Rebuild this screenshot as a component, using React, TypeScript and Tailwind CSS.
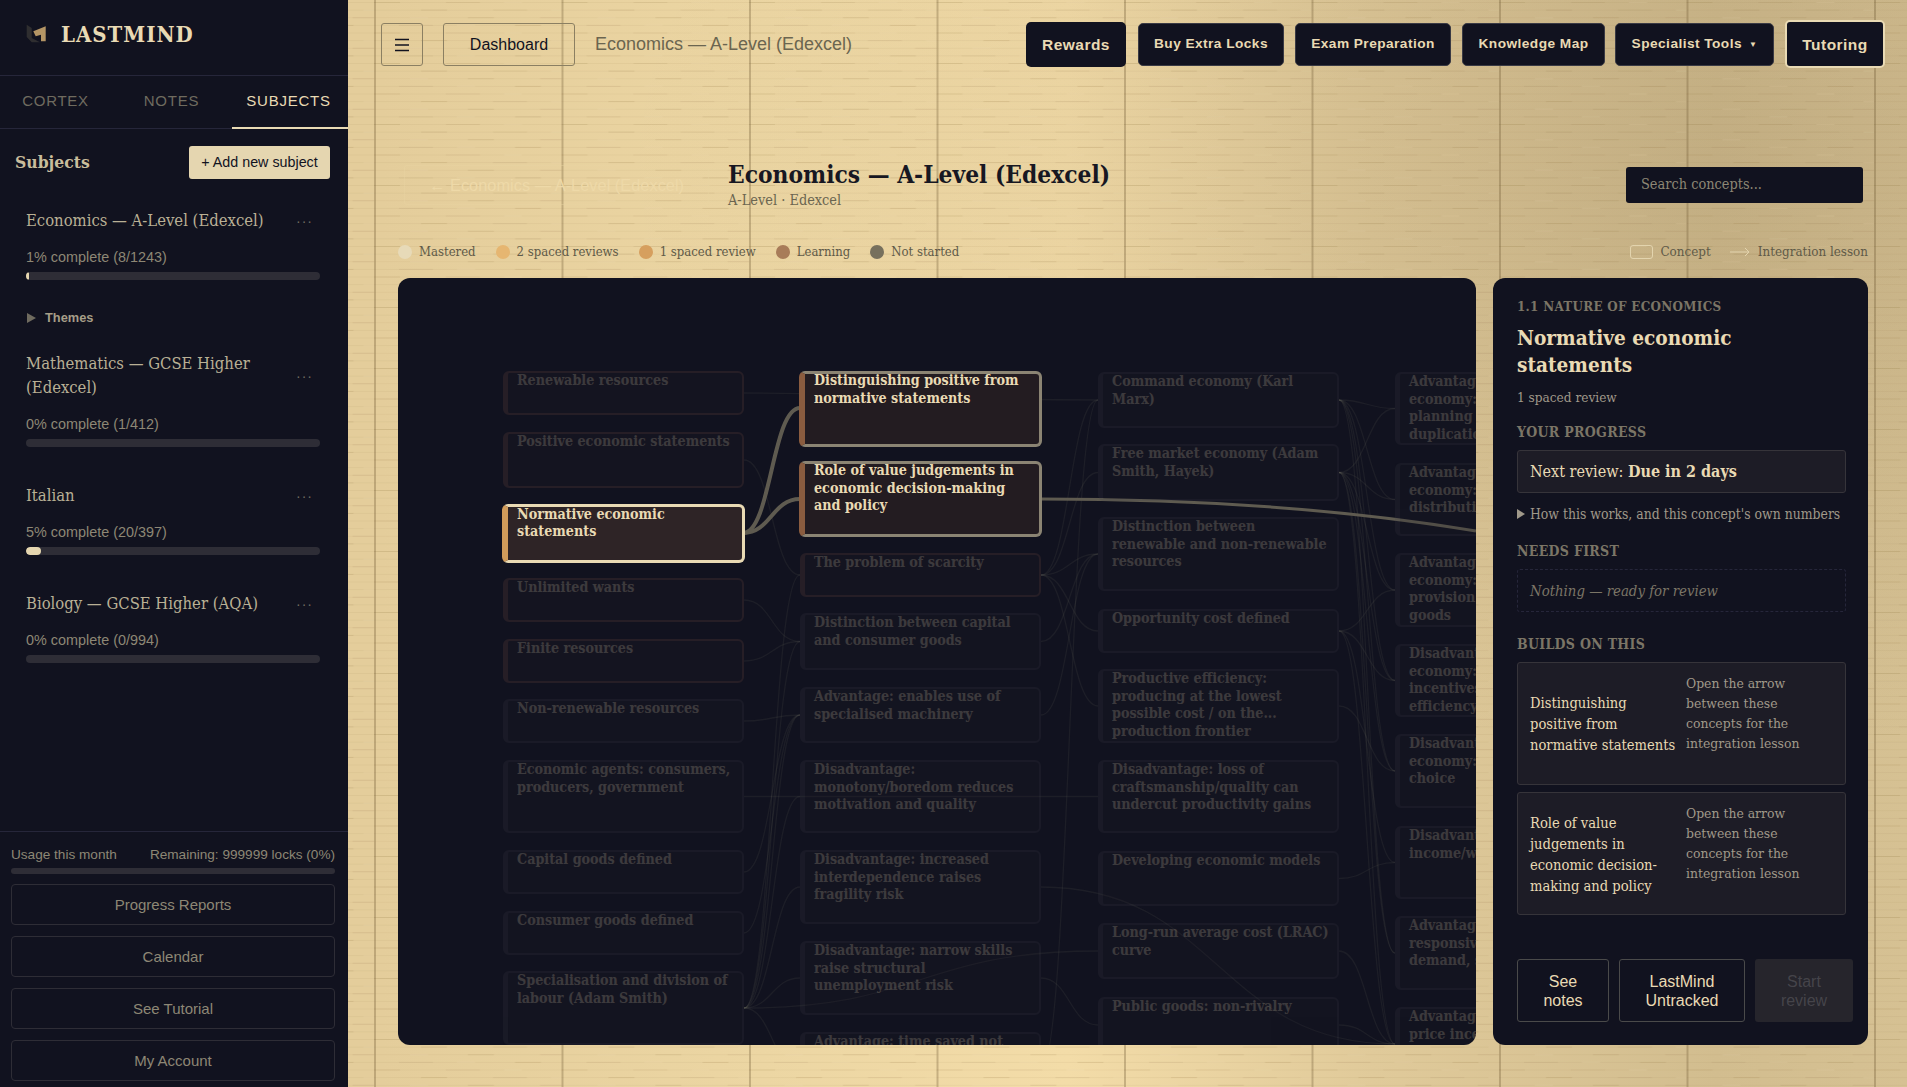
import React from "react";

const sans = "font-['Liberation_Sans',Arial,sans-serif]";

type N = { id: string; c: number; y: number; h: number; t: string[]; k?: "sel" | "hi" | "brown" };
const COLS = [503, 800, 1098, 1395];
const nodes: N[] = [
  { id: "a1", c: 0, y: 371, h: 44, k: "brown", t: ["Renewable resources"] },
  { id: "a2", c: 0, y: 432, h: 56, k: "brown", t: ["Positive economic statements"] },
  { id: "a3", c: 0, y: 504, h: 59, k: "sel", t: ["Normative economic", "statements"] },
  { id: "a4", c: 0, y: 578, h: 44, k: "brown", t: ["Unlimited wants"] },
  { id: "a5", c: 0, y: 639, h: 44, k: "brown", t: ["Finite resources"] },
  { id: "a6", c: 0, y: 699, h: 44, t: ["Non-renewable resources"] },
  { id: "a7", c: 0, y: 760, h: 73, t: ["Economic agents: consumers,", "producers, government"] },
  { id: "a8", c: 0, y: 850, h: 44, t: ["Capital goods defined"] },
  { id: "a9", c: 0, y: 911, h: 44, t: ["Consumer goods defined"] },
  { id: "a10", c: 0, y: 971, h: 74, t: ["Specialisation and division of", "labour (Adam Smith)"] },
  { id: "b1", c: 1, y: 371, h: 76, k: "hi", t: ["Distinguishing positive from", "normative statements"] },
  { id: "b2", c: 1, y: 461, h: 76, k: "hi", t: ["Role of value judgements in", "economic decision-making", "and policy"] },
  { id: "b3", c: 1, y: 553, h: 44, k: "brown", t: ["The problem of scarcity"] },
  { id: "b4", c: 1, y: 613, h: 57, t: ["Distinction between capital", "and consumer goods"] },
  { id: "b5", c: 1, y: 687, h: 56, t: ["Advantage: enables use of", "specialised machinery"] },
  { id: "b6", c: 1, y: 760, h: 73, t: ["Disadvantage:", "monotony/boredom reduces", "motivation and quality"] },
  { id: "b7", c: 1, y: 850, h: 74, t: ["Disadvantage: increased", "interdependence raises", "fragility risk"] },
  { id: "b8", c: 1, y: 941, h: 74, t: ["Disadvantage: narrow skills", "raise structural", "unemployment risk"] },
  { id: "b9", c: 1, y: 1032, h: 74, t: ["Advantage: time saved not", "moving between tasks"] },
  { id: "c1", c: 2, y: 372, h: 56, t: ["Command economy (Karl", "Marx)"] },
  { id: "c2", c: 2, y: 444, h: 57, t: ["Free market economy (Adam", "Smith, Hayek)"] },
  { id: "c3", c: 2, y: 517, h: 74, t: ["Distinction between", "renewable and non-renewable", "resources"] },
  { id: "c4", c: 2, y: 609, h: 44, t: ["Opportunity cost defined"] },
  { id: "c5", c: 2, y: 669, h: 74, t: ["Productive efficiency:", "producing at the lowest", "possible cost / on the...", "production frontier"] },
  { id: "c6", c: 2, y: 760, h: 73, t: ["Disadvantage: loss of", "craftsmanship/quality can", "undercut productivity gains"] },
  { id: "c7", c: 2, y: 851, h: 55, t: ["Developing economic models"] },
  { id: "c8", c: 2, y: 923, h: 56, t: ["Long-run average cost (LRAC)", "curve"] },
  { id: "c9", c: 2, y: 997, h: 56, t: ["Public goods: non-rivalry"] },
  { id: "d1", c: 3, y: 372, h: 73, t: ["Advantage: command", "economy: central", "planning avoids", "duplication of effort"] },
  { id: "d2", c: 3, y: 463, h: 73, t: ["Advantage: command", "economy: equal", "distribution of income"] },
  { id: "d3", c: 3, y: 553, h: 74, t: ["Advantage: command", "economy: better", "provision of public", "goods"] },
  { id: "d4", c: 3, y: 644, h: 73, t: ["Disadvantage: command", "economy: weak", "incentives for", "efficiency"] },
  { id: "d5", c: 3, y: 734, h: 74, t: ["Disadvantage: command", "economy: limited", "choice"] },
  { id: "d6", c: 3, y: 826, h: 73, t: ["Disadvantage: market", "income/wealth gaps"] },
  { id: "d7", c: 3, y: 916, h: 74, t: ["Advantage: market", "responsive to consumer", "demand, signals"] },
  { id: "d8", c: 3, y: 1007, h: 74, t: ["Advantage: market", "price incentives"] },
];
const edges: [string, string][] = [
  ["a1", "c1"], ["a2", "b3"], ["a5", "b4"], ["a6", "b5"], ["a7", "c6"], ["a8", "b5"], ["a9", "b5"], ["a4", "b4"],
  ["a10", "b3"], ["a10", "b4"], ["a10", "b5"], ["a10", "b6"], ["a10", "b7"], ["a10", "b8"], ["a10", "b9"], ["a10", "c8"],
  ["b3", "c1"], ["b3", "c2"], ["b3", "c3"], ["b3", "c4"], ["b3", "c5"], ["b4", "c3"], ["b5", "c3"], ["b7", "d8"], ["b8", "c9"], ["b9", "c1"],
  ["c1", "d1"], ["c1", "d2"], ["c1", "d3"], ["c1", "d4"], ["c1", "d5"], ["c1", "d7"],
  ["c2", "d1"], ["c2", "d2"], ["c2", "d3"], ["c2", "d4"], ["c2", "d5"], ["c2", "d7"], ["c2", "d8"],
  ["c4", "d3"], ["c4", "d4"], ["c4", "d6"], ["c4", "d8"], ["c5", "d5"], ["c7", "d6"], ["c8", "d8"], ["c9", "d8"],
];
const W = 241;
const byId = Object.fromEntries(nodes.map((n) => [n.id, n]));
const curve = (a: N, b: N) => {
  const x1 = COLS[a.c] + W, y1 = a.y + a.h / 2, x2 = COLS[b.c], y2 = b.y + b.h / 2;
  const d = Math.max(24, (x2 - x1) * 0.5);
  return `M${x1} ${y1} C${x1 + d} ${y1} ${x2 - d} ${y2} ${x2} ${y2}`;
};

function GraphNode({ n }: { n: N }) {
  const base = "absolute overflow-hidden rounded-[6px] pl-[9px] text-[14.2px] font-bold leading-[17.5px] whitespace-nowrap text-[#e9dab4]";
  const tone =
    n.k === "sel"
      ? "border-[3px] border-l-[6px] border-[#e9dab4] border-l-[#d19b5a] bg-[#2e2426] leading-[17px]"
      : n.k === "hi"
        ? "border-[3px] border-l-[6px] border-[#8b8473] border-l-[#8a5c3f] bg-[#231c21]"
        : n.k === "brown"
          ? "border-[2px] border-l-[5px] border-[#7a5044] bg-[#241c24] opacity-20"
          : "border-[2px] border-l-[5px] border-[#3e3e48] bg-[#1d1c26] opacity-20";
  const lit = n.k === "hi" || n.k === "sel";
  const shift = n.k === "hi" ? "-mt-[2px]" : "-mt-[1px]";
  return (
    <div
      className={base + " " + tone}
      style={{ left: COLS[n.c] - 398 - (lit ? 1 : 0), top: n.y - 278, width: W + (lit ? 2 : 0), height: n.h }}
    >
      <div className={shift}>
        {n.t.map((l) => (
          <div key={l}>{l}</div>
        ))}
      </div>
    </div>
  );
}

function Graph() {
  return (
    <div className="relative h-[767px] w-[1078px] shrink-0 overflow-hidden rounded-[12px] bg-[#11121f]">
      <svg className="absolute inset-0 h-full w-full" viewBox="398 278 1078 767" fill="none">
        {edges.map(([a, b]) => (
          <path key={a + b} d={curve(byId[a], byId[b])} stroke="#8d8775" strokeOpacity="0.1" strokeWidth="1.3" />
        ))}
        <path d="M743 533 C771 533 772 408 800 408" stroke="#5f5b50" strokeWidth="4" />
        <path d="M743 533 C771 533 772 499 800 499" stroke="#5f5b50" strokeWidth="4" />
        <path d="M1041 499 C1200 499 1350 510 1476 531" stroke="#5f5b50" strokeWidth="3" />
      </svg>
      {nodes.map((n) => (
        <GraphNode key={n.id} n={n} />
      ))}
    </div>
  );
}

function Subject({ name, progress, className, fill }: { name: string[]; progress: string; className: string; fill: string }) {
  return (
    <div className={"pl-[26px] pr-[28px] " + className}>
      <div className="flex items-center justify-between pr-[7px]">
        <div className="text-[16.5px] leading-[24px] text-[#b9b095]">
          {name.map((l) => (
            <div key={l}>{l}</div>
          ))}
        </div>
        <span className={"text-[14px] tracking-[1px] text-[#6f6b5f] " + sans}>···</span>
      </div>
      <div className={"mt-[15px] text-[14.4px] leading-[18px] text-[#8d8775] " + sans}>{progress}</div>
      <div className="mt-[6px] h-[8px] w-[294px] overflow-hidden rounded-full bg-[#2e2d36]">
        <div className={"h-full rounded-full bg-[#e5d6b0] " + fill} />
      </div>
    </div>
  );
}

function Sidebar() {
  return (
    <aside className="relative z-10 flex h-[1087px] w-[348px] shrink-0 flex-col bg-[#11121f]">
      <div className="flex h-[76px] items-center border-b border-[#26263a] pb-[7px] pl-[26px]">
        <svg width="20" height="20" viewBox="26 26 20 20" className="shrink-0">
          <polygon points="26.7,26.7 31.7,30 31.7,40 40,44.3 31.7,44.3 26.7,39" fill="#2f2e30" />
          <polygon points="33.3,33.3 45.7,28.3 45.7,43.3 41,43.3 41,36.7 35.7,38.3" fill="#b49565" />
        </svg>
        <span className="ml-[15px] text-[22px] font-bold tracking-[1px] text-[#e9dab4]">LASTMIND</span>
      </div>
      <div className={"grid h-[53px] grid-cols-3 border-b border-[#26263a] text-[15px] tracking-[0.75px] " + sans}>
        <div className="flex items-center justify-center pb-[1px] pr-[5px] text-[#6f6b5f]">CORTEX</div>
        <div className="flex items-center justify-center pb-[1px] pr-[5px] text-[#6f6b5f]">NOTES</div>
        <div className="-mb-px flex items-center justify-center border-b-2 border-[#e9dab4] pr-[3px] text-[#e9dab4]">SUBJECTS</div>
      </div>
      <div className="mt-[17px] flex items-center justify-between pl-[15px] pr-[18px]">
        <span className="text-[17.4px] font-bold text-[#c9bd9c]">Subjects</span>
        <button className={"h-[33px] w-[141px] rounded-[3px] bg-[#e5d6b0] text-[14.3px] text-[#11121f] " + sans}>+ Add new subject</button>
      </div>
      <Subject className="mt-[30px]" name={["Economics — A-Level (Edexcel)"]} progress="1% complete (8/1243)" fill="w-[1%]" />
      <div className="mt-[30px] flex h-[16px] items-center pl-[27px]">
        <span className="h-0 w-0 border-y-[5px] border-l-[9px] border-y-transparent border-l-[#6f6b5f]" />
        <span className={"ml-[9px] text-[12.8px] font-bold text-[#a69e88] " + sans}>Themes</span>
      </div>
      <Subject className="mt-[26px]" name={["Mathematics — GCSE Higher", "(Edexcel)"]} progress="0% complete (1/412)" fill="w-0" />
      <Subject className="mt-[37px]" name={["Italian"]} progress="5% complete (20/397)" fill="w-[5%]" />
      <Subject className="mt-[37px]" name={["Biology — GCSE Higher (AQA)"]} progress="0% complete (0/994)" fill="w-0" />
      <div className={"mt-auto border-t border-[#26263a] pb-[6px] pl-[11px] pr-[13px] pt-[15px] " + sans}>
        <div className="flex justify-between text-[13.6px] leading-[16px] text-[#8d8775]">
          <span>Usage this month</span>
          <span>Remaining: 999999 locks (0%)</span>
        </div>
        <div className="mt-[5px] h-[6px] rounded-full bg-[#2e2d36]" />
        <div className="mt-[10px] flex flex-col gap-[11px]">
          {["Progress Reports", "Calendar", "See Tutorial", "My Account"].map((l) => (
            <button key={l} className="h-[41px] rounded-[4px] border border-[#2e2d36] pt-[1px] text-[15px] text-[#8d8775]">
              {l}
            </button>
          ))}
        </div>
      </div>
    </aside>
  );
}

function NavBtn({ label, w, big, caret, active }: { label: string; w: string; big?: boolean; caret?: boolean; active?: boolean }) {
  return (
    <button
      className={
        "flex items-center justify-center gap-[7px] rounded-[5px] bg-[#11121f] pt-[1px] font-bold text-[#e9dab4] " +
        w + " " +
        (big ? "text-[15.5px] tracking-[0.45px] " : "h-[43px] text-[13.7px] tracking-[0.45px] ") +
        (active ? "h-[48px] border-2 border-[#e9dab4] " : big ? "h-[45px] " : "border border-[#3a3a44] ") +
        sans
      }
    >
      {label}
      {caret && <span className="text-[8px]">▼</span>}
    </button>
  );
}

function Dot({ c, label, ml }: { c: string; label: string; ml: string }) {
  return (
    <div className={"flex items-center " + ml}>
      <span className={"h-[14px] w-[14px] rounded-full " + c} />
      <span className="ml-[7px]">{label}</span>
    </div>
  );
}

const sectionLabel = "text-[14px] font-bold leading-[16px] tracking-[0.3px] text-[#7b7566]";

function BuildBox({ lines, className }: { lines: string[]; className: string }) {
  return (
    <div className={"flex h-[123px] rounded-[3px] border border-[#36343a] bg-[#1d1c26] " + className}>
      <div className="flex w-[168px] shrink-0 flex-col justify-center pl-[12px] text-[14.6px] leading-[21px] text-[#e9dab4]">
        {lines.map((l) => (
          <div key={l} className="whitespace-nowrap">{l}</div>
        ))}
      </div>
      <div className="pt-[10px] text-[13.8px] leading-[20px] text-[#a0998a]">
        <div>Open the arrow</div>
        <div>between these</div>
        <div>concepts for the</div>
        <div>integration lesson</div>
      </div>
    </div>
  );
}

function DetailPanel() {
  return (
    <div className="ml-[17px] flex h-[767px] w-[375px] shrink-0 flex-col rounded-[12px] bg-[#11121f] pl-[24px] pr-[15px] pt-[21px] text-[#e9dab4]">
      <div className="text-[13.3px] font-bold leading-[16px] tracking-[0.3px] text-[#7b7566]">1.1 NATURE OF ECONOMICS</div>
      <div className="mt-[10px] text-[20.6px] font-bold leading-[27px]">
        <div>Normative economic</div>
        <div>statements</div>
      </div>
      <div className="mt-[9px] text-[13.5px] leading-[18px] text-[#a0998a]">1 spaced review</div>
      <div className={"mt-[18px] " + sectionLabel}>YOUR PROGRESS</div>
      <div className="mt-[10px] flex h-[43px] w-[329px] items-center rounded-[3px] border border-[#36343a] bg-[#1d1c26] pl-[12px] text-[16px]">
        Next review:&nbsp;<b>Due in 2 days</b>
      </div>
      <div className="mt-[12px] flex h-[18px] items-center whitespace-nowrap text-[13.85px] text-[#a0998a]">
        <span className="mr-[5px] h-0 w-0 border-y-[5px] border-l-[8px] border-y-transparent border-l-[#a0998a]" />
        How this works, and this concept's own numbers
      </div>
      <div className={"mt-[20px] " + sectionLabel}>NEEDS FIRST</div>
      <div className="mt-[10px] flex h-[43px] w-[329px] items-center rounded-[3px] border border-dashed border-[#26263a] pl-[12px] pt-[1px] text-[14.8px] italic text-[#7b7566]">
        Nothing — ready for review
      </div>
      <div className={"mt-[24px] " + sectionLabel}>BUILDS ON THIS</div>
      <BuildBox className="mt-[10px] w-[329px]" lines={["Distinguishing", "positive from", "normative statements"]} />
      <BuildBox className="mt-[7px] w-[329px]" lines={["Role of value", "judgements in", "economic decision-", "making and policy"]} />
      <div className={"mt-[44px] flex gap-[10px] text-[16px] leading-[19px] " + sans}>
        <button className="h-[63px] w-[92px] rounded-[3px] border border-[#4a4a4a]">See<br />notes</button>
        <button className="h-[63px] w-[126px] rounded-[3px] border border-[#4a4a4a]">LastMind<br />Untracked</button>
        <button className="h-[63px] w-[98px] rounded-[3px] bg-[#26252c] text-[#45444a]">Start<br />review</button>
      </div>
    </div>
  );
}

function Wood() {
  const rows = [0, 1, 2, 3, 4, 5, 6, 7];
  return (
    <svg className="absolute inset-0 h-full w-full" aria-hidden="true">
      <defs>
        <pattern id="wood" width="187.5" height="61" patternUnits="userSpaceOnUse" x="-1">
          {rows.map((r) => {
            const y = r * 7.625 + 2;
            const o = (r * 47) % 188;
            return (
              <g key={r}>
                <rect x="0" y={y} width="187.5" height="1" fill="#8a6f3c" fillOpacity="0.08" />
                <rect x={o} y={y} width="26" height="1" fill="#8a6f3c" fillOpacity="0.15" />
                <rect x={(o + 72) % 188} y={y} width="34" height="1" fill="#8a6f3c" fillOpacity="0.11" />
                <rect x={(o + 130) % 188} y={y} width="18" height="1" fill="#fff3d0" fillOpacity="0.12" />
              </g>
            );
          })}
          <rect x="0" y="0" width="2" height="61" fill="#6e5632" fillOpacity="0.32" />
        </pattern>
      </defs>
      <rect width="100%" height="100%" fill="url(#wood)" />
    </svg>
  );
}

export default function App() {
  return (
    <div className="relative flex h-[1087px] w-full overflow-hidden bg-[radial-gradient(ellipse_at_90%_15%,rgba(110,90,60,0.16),transparent_45%),linear-gradient(90deg,#e4cd9b_0%,#e4cd9b_20%,#ecd6a3_40%,#f3dca8_56%,#e0ca9a_72%,#d2bd8f_90%,#d6c193_100%)] font-['DejaVu_Serif_Condensed','Liberation_Serif',serif]">
      <Wood />
      <Sidebar />
      <main className="relative flex min-w-0 flex-1 flex-col">
        <header className={"flex items-start pl-[33px] pr-[22px] pt-[20px] " + sans}>
          <button className="mt-[3px] flex h-[43px] w-[42px] items-center justify-center rounded-[3px] border border-[#8b7f62] text-[#11121f]">
            <svg width="14" height="14" viewBox="0 0 14 14" stroke="currentColor" strokeWidth="1.4"><path d="M0 1.5H14M0 7H14M0 12.5H14" /></svg>
          </button>
          <button className="ml-[20px] mt-[3px] h-[43px] w-[132px] rounded-[3px] border border-[#8b7f62] text-[16px] text-[#11121f]">Dashboard</button>
          <span className="ml-[20px] mt-[3px] flex h-[43px] items-center text-[18px] text-[#6b6550]">Economics — A-Level (Edexcel)</span>
          <div className="ml-auto flex items-center gap-[11px]">
            <NavBtn label="Rewards" w="w-[100px]" big />
            <NavBtn label="Buy Extra Locks" w="ml-[1px] w-[146px]" />
            <NavBtn label="Exam Preparation" w="w-[156px]" />
            <NavBtn label="Knowledge Map" w="w-[143px]" />
            <NavBtn label="Specialist Tools" w="-ml-[1px] w-[159px]" caret />
            <NavBtn label="Tutoring" w="w-[100px]" big active />
          </div>
        </header>
        <div className="mt-[97px] flex h-[40px] items-center pr-[44px]">
          <div className={"ml-[56px] flex h-[40px] w-[305px] items-center whitespace-nowrap rounded-[3px] border border-[#e8d4a3]/40 pl-[24px] text-[16.4px] text-[#eed9a8] " + sans}>← Economics — A-Level (Edexcel)</div>
          <div className="ml-[19px] -mt-[1px]">
            <div className="text-[24.3px] font-bold leading-[30px] text-[#171722]">Economics — A-Level (Edexcel)</div>
            <div className="mt-[1px] text-[14.4px] leading-[18px] text-[#6b6550]">A-Level · Edexcel</div>
          </div>
          <div className="ml-auto flex h-[36px] w-[237px] items-center rounded-[3px] bg-[#11121f] pb-[1px] pl-[15px] text-[14.4px] text-[#8d8775]">Search concepts...</div>
        </div>
        <div className="mt-[40px] flex h-[14px] items-center pl-[50px] pr-[39px] text-[13px] text-[#5f5a48]">
          <Dot c="bg-[#e7dab8]" label="Mastered" ml="" />
          <Dot c="bg-[#e6b671]" label="2 spaced reviews" ml="ml-[20px]" />
          <Dot c="bg-[#d69f5e]" label="1 spaced review" ml="ml-[20px]" />
          <Dot c="bg-[#a87c59]" label="Learning" ml="ml-[20px]" />
          <Dot c="bg-[#77705d]" label="Not started" ml="ml-[20px]" />
          <div className="ml-auto flex items-center text-[13.3px]">
            <span className="h-[14px] w-[23px] rounded-[3px] border border-[#e3d4ae]" />
            <span className="ml-[7px]">Concept</span>
            <svg width="20" height="10" viewBox="0 0 20 10" fill="none" stroke="#e3d4ae" className="ml-[19px]"><path d="M0 5H19M15 1L19 5L15 9" /></svg>
            <span className="ml-[8px]">Integration lesson</span>
          </div>
        </div>
        <div className="mt-[19px] flex pl-[50px]">
          <Graph />
          <DetailPanel />
        </div>
      </main>
    </div>
  );
}
